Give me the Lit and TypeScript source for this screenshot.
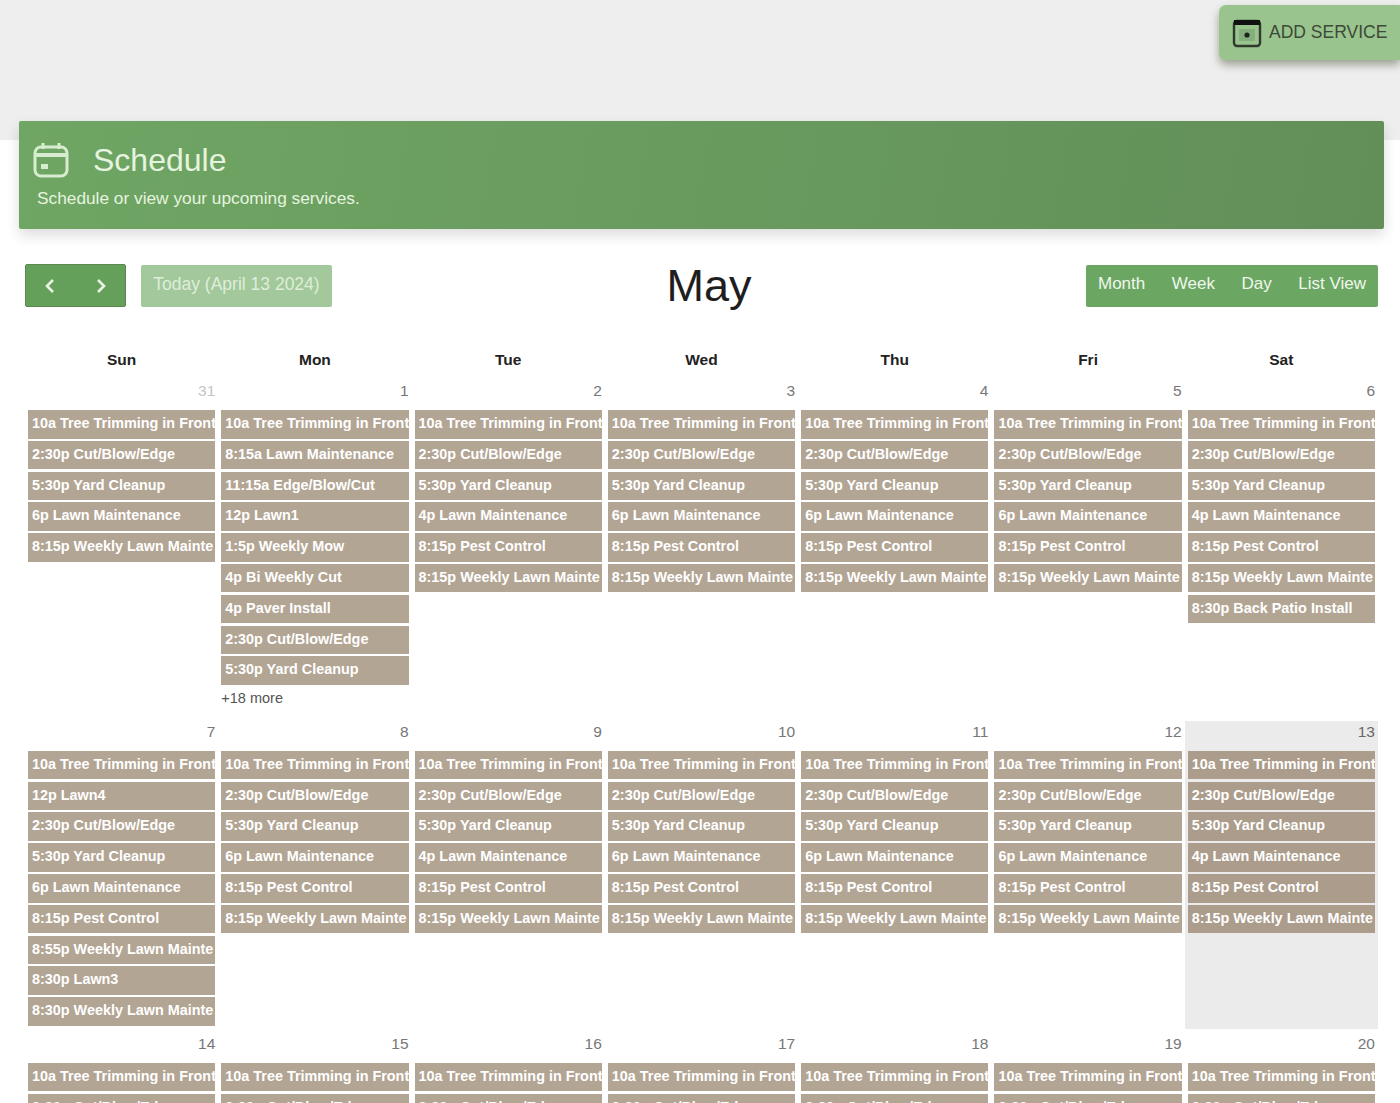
import { LitElement, html, css } from "lit";
import { customElement } from "lit/decorators.js";

const T = "10a Tree Trimming in Front";
const C = "2:30p Cut/Blow/Edge";
const Y = "5:30p Yard Cleanup";
const L6 = "6p Lawn Maintenance";
const L4 = "4p Lawn Maintenance";
const P = "8:15p Pest Control";
const W = "8:15p Weekly Lawn Mainte";
const std = (l = L6) => [T, C, Y, l, P, W];

interface Day { n: number; muted?: boolean; today?: boolean; ev: string[]; more?: string }

const week1: Day[] = [
  { n: 31, muted: true, ev: [T, C, Y, L6, W] },
  { n: 1, ev: [T, "8:15a Lawn Maintenance", "11:15a Edge/Blow/Cut", "12p Lawn1", "1:5p Weekly Mow", "4p Bi Weekly Cut", "4p Paver Install", C, Y], more: "+18 more" },
  { n: 2, ev: std(L4) },
  { n: 3, ev: std() },
  { n: 4, ev: std() },
  { n: 5, ev: std() },
  { n: 6, ev: [...std(L4), "8:30p Back Patio Install"] },
];
const week2: Day[] = [
  { n: 7, ev: [T, "12p Lawn4", C, Y, L6, P, "8:55p Weekly Lawn Mainte", "8:30p Lawn3", "8:30p Weekly Lawn Mainte"] },
  { n: 8, ev: std() },
  { n: 9, ev: std(L4) },
  { n: 10, ev: std() },
  { n: 11, ev: std() },
  { n: 12, ev: std() },
  { n: 13, today: true, ev: std(L4) },
];
const week3: Day[] = [14, 15, 16, 17, 18, 19, 20].map((n) => ({ n, ev: [T, C] }));

@customElement("app-root")
export class AppRoot extends LitElement {
  static styles = css`
    :host { display: block; height: 1103px; overflow: hidden; font-family: "Liberation Sans", Arial, sans-serif; }
    .page { height: 1103px; overflow: hidden; background: linear-gradient(#eeeeee 140px, #ffffff 140px); }
    .top { display: flex; justify-content: flex-end; padding-top: 5px; }
    .add {
      width: 181px; height: 55px; box-sizing: border-box; display: flex; align-items: center; gap: 6px; padding-left: 12px;
      background: #9ac48e; border-radius: 7px 0 0 7px; color: #3c4a38; font-size: 17.5px; white-space: nowrap;
      box-shadow: 0 5px 9px rgba(60, 70, 40, .45);
    }
    .add svg { width: 32px; height: 32px; flex: none; }
    .banner {
      margin: 61px 16px 0 19px; height: 108px; box-sizing: border-box; padding: 20px 0 0 14px; color: #e6f3df;
      background: linear-gradient(100deg, #6fa664, #628f58); border-radius: 2px;
      box-shadow: 0 6px 14px rgba(0, 0, 0, .14);
    }
    .title { display: flex; align-items: center; gap: 24px; font-size: 32px; line-height: 38px; }
    .title svg { width: 36px; height: 38px; flex: none; }
    .sub { font-size: 17.3px; line-height: 20px; margin: 9px 0 0 4px; }
    .bar { display: flex; justify-content: space-between; align-items: center; margin: 35px 22px 0 25px; height: 43px; }
    .left { display: flex; gap: 15px; align-items: center; }
    .nav {
      width: 101px; height: 43px; box-sizing: border-box; display: flex; justify-content: space-between; align-items: center; padding: 0 15px;
      background: #65a05a; border: 1px solid #5a8a50; border-radius: 2px;
    }
    .nav svg { width: 18px; height: 18px; }
    .todaybtn { width: 191px; height: 42px; display: flex; align-items: center; justify-content: center; background: #a2c89b; color: #dfeeda; font-size: 17.5px; border-radius: 2px; padding-bottom: 2px; box-sizing: border-box; white-space: nowrap; }
    .month { font-size: 45px; color: #1e1e1e; line-height: 43px; }
    .views { display: flex; height: 42px; width: 292px; box-sizing: border-box; padding: 0 12px 3px; justify-content: space-between; align-items: center; background: #6ba663; color: #f0f7ec; font-size: 17px; border-radius: 2px; }
    .cal { margin: 38px 22px 0 25px; }
    .heads, .week { display: grid; grid-template-columns: repeat(7, minmax(0, 1fr)); }
    .heads { height: 35px; font-weight: 700; font-size: 15.5px; color: #222; text-align: center; line-height: 30px; }
    .weeks { display: grid; row-gap: 4px; }
    .cell { min-width: 0; padding-bottom: 9px; }
    .week + .week .cell { padding-bottom: 0; }
    .cell.now { background: #ebebeb; padding-bottom: 0; height: 308px; }
    .num { height: 30px; line-height: 22px; text-align: right; padding-right: 3px; font-size: 15.5px; color: #777; }
    .num.muted { color: #c4c4c4; }
    .now .num { color: #666; }
    .ev {
      height: 28.5px; line-height: 26px; margin: 0 3px 2.3px; padding-left: 4px; overflow: hidden; white-space: nowrap;
      background: #b3a594; color: #fff; font-weight: 700; font-size: 14.4px;
    }
    .now .ev { background: #ab9c8b; }
    .more { font-size: 14.5px; color: #555; margin: 3px 0 0 3px; line-height: 20px; }
  `;

  private cell(d: Day) {
    return html`<div class="cell ${d.today ? "now" : ""}">
      <div class="num ${d.muted ? "muted" : ""}">${d.n}</div>
      ${d.ev.map((e) => html`<div class="ev">${e}</div>`)}
      ${d.more ? html`<div class="more">${d.more}</div>` : ""}
    </div>`;
  }

  render() {
    return html`<div class="page">
      <div class="top">
        <div class="add">
          <svg viewBox="0 0 32 32" fill="none">
            <rect x="3" y="4" width="26" height="25" rx="3" stroke="#2f3a2c" stroke-width="2.4"/>
            <rect x="3" y="3" width="26" height="5" fill="#111"/>
            <rect x="8" y="12" width="16" height="12" fill="#86ad7c"/>
            <circle cx="16" cy="18" r="2.6" fill="#1c241a"/>
          </svg>
          <span>ADD SERVICE</span>
        </div>
      </div>
      <div class="banner">
        <div class="title">
          <svg viewBox="0 0 36 38" fill="none" stroke="#d8edcf" stroke-width="3">
            <rect x="2" y="6" width="32" height="29" rx="6"/>
            <path d="M2 14h32" stroke-width="4"/>
            <path d="M10 2v6M26 2v6"/>
            <rect x="8" y="23" width="7" height="5" fill="#d8edcf" stroke="none"/>
          </svg>
          <span>Schedule</span>
        </div>
        <div class="sub">Schedule or view your upcoming services.</div>
      </div>
      <div class="bar">
        <div class="left">
          <div class="nav">
            <svg viewBox="0 0 18 18" fill="none" stroke="#e9f4e4" stroke-width="2.6"><path d="M12 3 6 9l6 6"/></svg>
            <svg viewBox="0 0 18 18" fill="none" stroke="#e9f4e4" stroke-width="2.6"><path d="m6 3 6 6-6 6"/></svg>
          </div>
          <div class="todaybtn">Today (April 13 2024)</div>
        </div>
        <div class="month">May</div>
        <div class="views"><span>Month</span><span>Week</span><span>Day</span><span>List View</span></div>
      </div>
      <div class="cal">
        <div class="heads">${["Sun", "Mon", "Tue", "Wed", "Thu", "Fri", "Sat"].map((h) => html`<div>${h}</div>`)}</div>
        <div class="weeks">
          ${[week1, week2, week3].map((w) => html`<div class="week">${w.map((d) => this.cell(d))}</div>`)}
        </div>
      </div>
    </div>`;
  }
}
